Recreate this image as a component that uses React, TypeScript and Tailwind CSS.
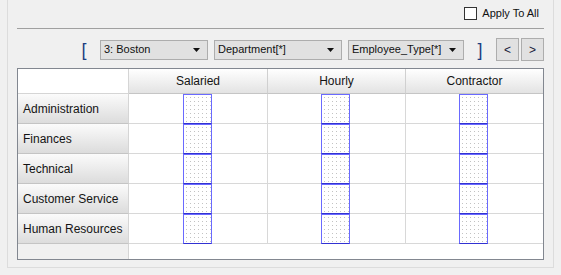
import { ReactNode } from 'react'

const columns = ['Salaried', 'Hourly', 'Contractor']
const rows = ['Administration', 'Finances', 'Technical', 'Customer Service', 'Human Resources']

function DotBox() {
  return (
    <div className="relative h-[30px] w-[29px] border border-[#6a6aff] border-b-[#3232d2] bg-white">
      <svg className="absolute inset-0" width="27" height="28">
        <defs>
          <pattern id="dots" x="2" y="2" width="4" height="4" patternUnits="userSpaceOnUse">
            <rect width="1" height="1" fill="#c2c2c2" />
          </pattern>
        </defs>
        <rect width="27" height="28" fill="url(#dots)" />
      </svg>
    </div>
  )
}

function Combo({ width, children }: { width: string; children: ReactNode }) {
  return (
    <div className={`flex h-[20px] ${width} items-center justify-between border border-[#adadad] bg-[#e1e1e1] pl-[3px] pr-[7px] text-[11px] text-[#111]`}>
      <span>{children}</span>
      <svg width="7" height="4" viewBox="0 0 7 4">
        <path d="M0 0h7L3.5 4z" fill="#111" />
      </svg>
    </div>
  )
}

function NavButton({ children }: { children: ReactNode }) {
  return (
    <button className="flex h-[23px] w-[23px] items-center justify-center border border-[#adadad] bg-[#e1e1e1] text-[12px] text-[#1a1a3a]">
      {children}
    </button>
  )
}

export default function App() {
  return (
    <div className="h-[275px] w-[561px] overflow-hidden bg-[#f0f0f0] font-['Liberation_Sans',Arial,sans-serif]">
      <div className="ml-[7px] h-[268px] w-[547px] border-x border-b border-[#dcdcdc] px-[9px]">
        {/* apply to all */}
        <div className="flex h-[28px] items-start justify-end pr-[5px] pt-[7px]">
          <label className="flex items-center gap-[5px] text-[11px] leading-[13px] text-[#111]">
            <span className="h-[13px] w-[13px] border border-[#333] bg-white" />
            Apply To All
          </label>
        </div>
        <div className="h-px bg-[#a0a0a0]" />

        {/* filter toolbar */}
        <div className="mt-[9px] flex h-[23px] items-center justify-end">
          <span className="w-[32px] text-center text-[18px] font-light leading-none text-[#1e3f82]">[</span>
          <div className="flex gap-[6px]">
            <Combo width="w-[108px]">3: Boston</Combo>
            <Combo width="w-[128px]">Department[*]</Combo>
            <Combo width="w-[116px]">Employee_Type[*]</Combo>
          </div>
          <span className="w-[32px] text-center text-[18px] font-light leading-none text-[#1e3f82]">]</span>
          <div className="flex gap-[2px]">
            <NavButton>&lt;</NavButton>
            <NavButton>&gt;</NavButton>
          </div>
        </div>

        {/* grid */}
        <div className="mt-[7px] border border-[#828790] bg-white text-[12px] text-[#141414]">
          <div className="grid grid-cols-[111px_139px_138px_137px]">
            <div className="h-[25px] border-r border-b border-[#d5d5d5] bg-white" />
            {columns.map((c, i) => (
              <div
                key={c}
                className={`flex h-[25px] items-center justify-center border-b border-[#c5c5c5] bg-gradient-to-b from-white to-[#e3e3e3] ${i < 2 ? 'border-r border-r-[#d0d0d0]' : ''}`}
              >
                {c}
              </div>
            ))}
            {rows.map(r => (
              <Row key={r} label={r} />
            ))}
            <div className="h-[15px] border-r border-[#d5d5d5] bg-[#f0f0f0]" />
            <div className="col-span-3 h-[15px] bg-white" />
          </div>
        </div>
      </div>
    </div>
  )
}

function Row({ label }: { label: string }) {
  return (
    <>
      <div className="flex h-[30px] items-center border-r border-b border-r-[#d5d5d5] border-b-[#c4c4c4] bg-gradient-to-b from-[#fbfbfb] to-[#dcdcdc] pt-px pl-[5px]">
        {label}
      </div>
      {columns.map((c, i) => (
        <div
          key={c}
          className={`flex h-[30px] justify-center border-b border-[#d8d8d8] pr-[2px] ${i < 2 ? 'border-r' : ''}`}
        >
          <DotBox />
        </div>
      ))}
    </>
  )
}
